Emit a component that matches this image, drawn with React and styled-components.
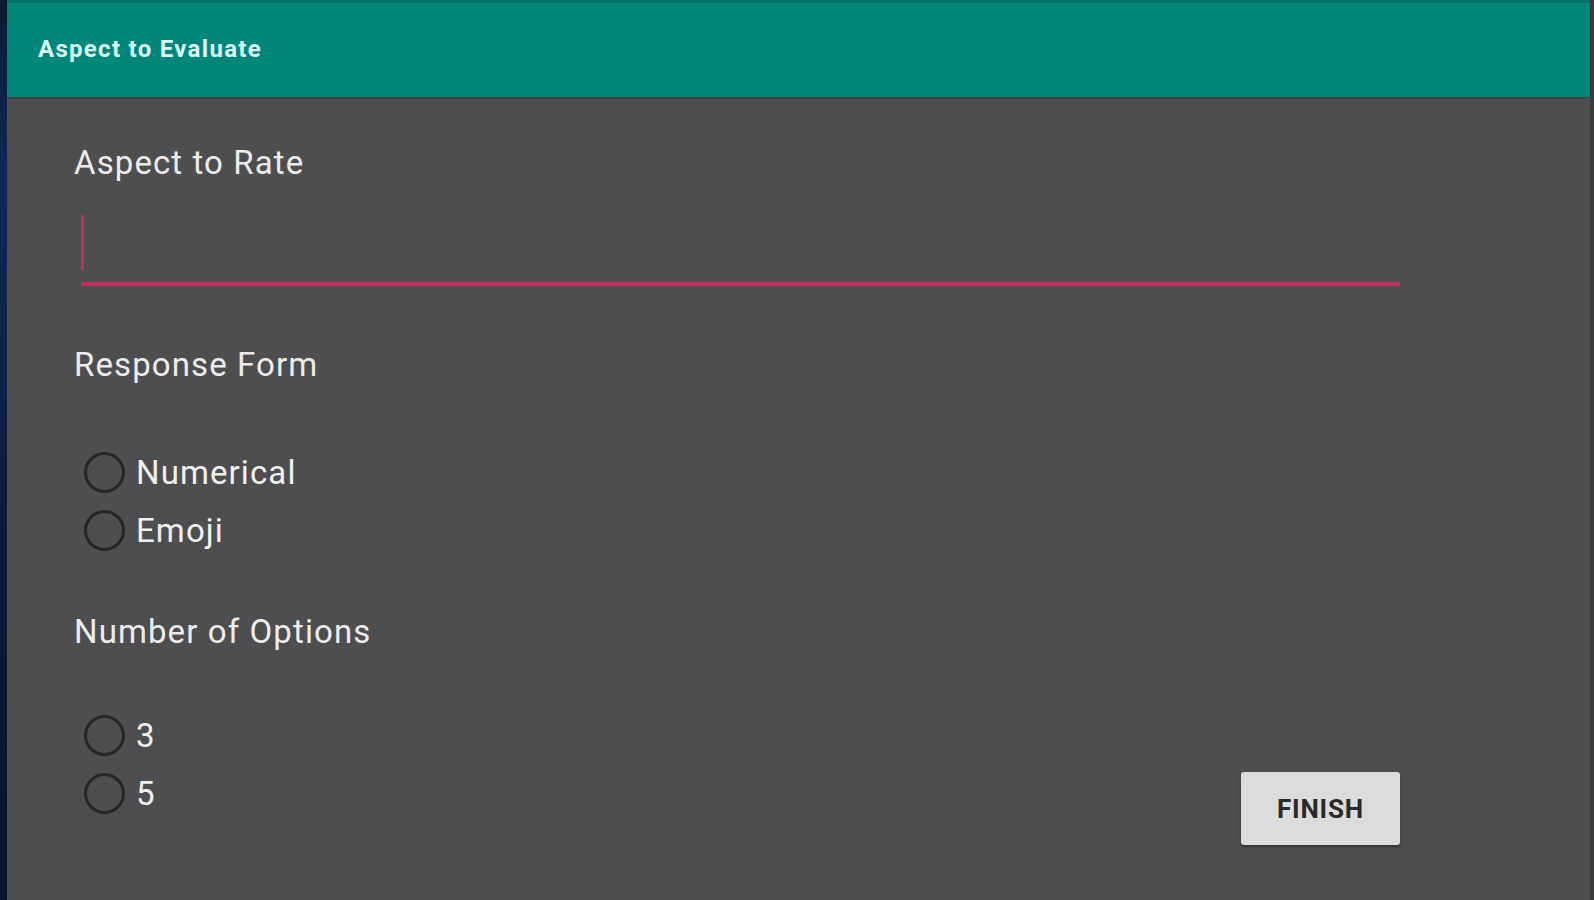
import React from 'react';
import styled, { createGlobalStyle } from "styled-components";

const GlobalStyle = createGlobalStyle`
	html, body {
		margin: 0;
		padding: 0;
		height: 100%;
		background: #4e4e50;
		font-family: Roboto, "Liberation Sans", sans-serif;
	}
	#root {
		height: 100%;
	}
`

const Screen = styled.div`
	display: flex;
	height: 900px;
	overflow: hidden;
`

const EdgeStrip = styled.div`
	width: 7px;
	flex-shrink: 0;
	background: linear-gradient(180deg, #0c1a33 0%, #10295c 20%, #0b1a38 60%, #061329 100%);
`

const Window = styled.div`
	flex: 1;
	display: flex;
	flex-direction: column;
	background: #4e4e50;
	border-right: 4px solid #3c3c3e;
`

const Toolbar = styled.div`
	height: 94px;
	border-top: 3px solid #007267;
	background: #01877a;
	display: flex;
	align-items: center;
	padding-left: 31px;
	box-shadow: 0 1px 2px rgba(0, 0, 0, 0.25);
`

const Title = styled.div`
	color: #dcf7f2;
	font-size: 24px;
	font-weight: 700;
	margin-top: -2px;
	letter-spacing: 1.3px;
`

const Form = styled.div`
	display: flex;
	flex-direction: column;
	padding: 46px 0 0 67px;
	width: 1326px;
`

const Label = styled.div`
	color: #ececec;
	font-size: 33px;
	line-height: 40px;
	letter-spacing: 1.1px;
	margin-top: ${(p) => p.$top || 0}px;
`

const Input = styled.div`
	margin: 30px 0 0 7px;
	border-bottom: 4px solid #c0305f;
	display: flex;
	align-items: flex-start;
	padding-top: 2px;
	box-sizing: border-box;
	height: 73px;
`

const Caret = styled.div`
	width: 3px;
	height: 55px;
	background: #c0305f;
`

const RadioGroup = styled.div`
	display: flex;
	flex-direction: column;
	margin-top: ${(p) => p.$top || 0}px;
`

const RadioRow = styled.label`
	display: flex;
	align-items: center;
	height: 58px;
	padding-left: 10px;
	gap: 11px;
	color: #f0f0f0;
	font-size: 33px;
	letter-spacing: 1.1px;
`

const Circle = styled.span`
	width: 35px;
	height: 35px;
	border-radius: 50%;
	border: 3px solid #262626;
	flex-shrink: 0;
`

const BottomRow = styled.div`
	display: flex;
	justify-content: space-between;
	align-items: flex-start;
	margin-top: 54px;
`

const FinishButton = styled.button`
	margin-top: 66px;
	width: 159px;
	height: 73px;
	border: none;
	border-radius: 3px;
	background: #dcdcdc;
	color: #2a2a2a;
	font-family: Roboto, "Liberation Sans", sans-serif;
	font-size: 26px;
	font-weight: 700;
	letter-spacing: 0.8px;
	box-shadow: 0 2px 3px rgba(0, 0, 0, 0.35);
	cursor: pointer;
`

const Radio = ({label}) => (
	<RadioRow>
		<Circle />
		<span>{label}</span>
	</RadioRow>
)

const App = () => {
	return (
		<>
			<GlobalStyle />
			<Screen>
				<EdgeStrip />
				<Window>
					<Toolbar>
						<Title>Aspect to Evaluate</Title>
					</Toolbar>
					<Form>
						<Label>Aspect to Rate</Label>
						<Input>
							<Caret />
						</Input>
						<Label $top={59}>Response Form</Label>
						<RadioGroup $top={58}>
							<Radio label="Numerical" />
							<Radio label="Emoji" />
						</RadioGroup>
						<Label $top={53}>Number of Options</Label>
						<BottomRow>
							<RadioGroup>
								<Radio label="3" />
								<Radio label="5" />
							</RadioGroup>
							<FinishButton>FINISH</FinishButton>
						</BottomRow>
					</Form>
				</Window>
			</Screen>
		</>
	);
}

export default App;
